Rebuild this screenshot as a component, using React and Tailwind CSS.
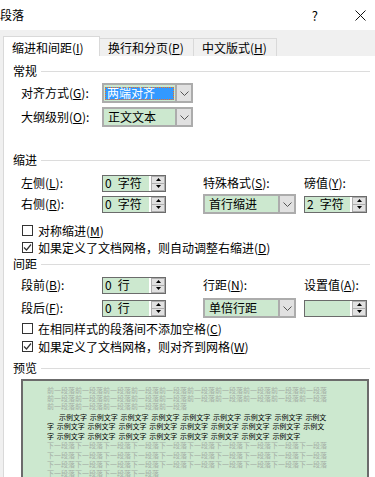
import React from "react";

// Word 段落 dialog, first tab (缩进和间距)
const Key = ({ children }) => (
  <span className="underline underline-offset-[1px]">{children}</span>
);

const Label = ({ text, k, colon = true }) => (
  <span className="whitespace-nowrap">
    {text}(<Key>{k}</Key>){colon ? ":" : ""}
  </span>
);

const Chevron = () => (
  <svg width="9" height="5" viewBox="0 0 9 5">
    <polyline points="0.5,0.5 4.5,4.5 8.5,0.5" fill="none" stroke="#555" strokeWidth="1" />
  </svg>
);

const Dropdown = ({ value, selected, width }) => (
  <div className={`flex h-[20px] ${width} border-2 border-[#acacac] bg-[#cce8cf]`}>
    <div className="flex min-w-0 flex-1 items-center pl-[1px] pr-[1px]">
      {selected ? (
        <span className="flex h-[13px] w-full items-center border border-dotted border-[#f07020] bg-[#3399ff] pl-[1px] leading-none text-white">
          {value}
        </span>
      ) : (
        <span className="pl-[3px] leading-none">{value}</span>
      )}
    </div>
    <div className="flex w-[16px] items-center justify-center border-l-2 border-[#acacac] bg-[#e1e1e1]">
      <Chevron />
    </div>
  </div>
);

const Spinner = ({ num, unit, width = "w-[64px]" }) => (
  <div className={`flex h-[17px] ${width} border border-[#6b6b6b] bg-white`}>
    <div className="flex flex-1 items-center bg-[#cce8cf] pl-[2px] leading-none">
      {num && <span>{num}</span>}
      {unit && <span className="ml-[6px]">{unit}</span>}
    </div>
    <div className="ml-[2px] flex w-[14px] flex-col border border-[#adadad] bg-[#e1e1e1]">
      <div className="flex flex-1 items-center justify-center border-b border-[#adadad]">
        <svg width="5" height="3" viewBox="0 0 5 3">
          <polygon points="2.5,0 5,3 0,3" fill="#000" />
        </svg>
      </div>
      <div className="flex flex-1 items-center justify-center">
        <svg width="5" height="3" viewBox="0 0 5 3">
          <polygon points="0,0 5,0 2.5,3" fill="#000" />
        </svg>
      </div>
    </div>
  </div>
);

const Section = ({ title, className = "" }) => (
  <div className={`flex h-[16px] items-center gap-[4px] pl-[9px] ${className}`}>
    <span className="leading-none">{title}</span>
    <div className="h-px flex-1 bg-[#dcdcdc]" />
  </div>
);

const Check = ({ checked, children, className = "" }) => (
  <div className={`flex h-[17px] items-center pl-[18px] ${className}`}>
    <span className="flex h-[11px] w-[11px] items-center justify-center border border-[#333] bg-white">
      {checked && (
        <svg width="9" height="9" viewBox="0 0 9 9">
          <polyline points="1,4.5 3.5,7 8,1.5" fill="none" stroke="#333" strokeWidth="1.2" />
        </svg>
      )}
    </span>
    <span className="ml-[5px] whitespace-nowrap leading-none">{children}</span>
  </div>
);

const Words = ({ lead, count, tail, indent }) => (
  <div className={`flex h-[9.2px] items-center gap-[2.8px] whitespace-nowrap leading-[7px] ${indent ? "pl-[12px]" : ""}`}>
    {lead && <span>{lead}</span>}
    {Array.from({ length: count }).map((_, i) => (
      <span key={i}>示例文字</span>
    ))}
    {tail && <span>{tail}</span>}
  </div>
);

const GrayLine = ({ word, n, h }) => (
  <div className={`flex ${h} items-center whitespace-nowrap leading-[7px]`}>{word.repeat(n)}</div>
);

const Preview = () => (
  <div className="ml-[17px] mt-[3px] h-[110px] w-[348px] border-2 border-[#6b6b6b] bg-[#cce8cf] pl-[24px] pt-[5px] text-[7px]">
    <div className="text-[#a4aea5]">
      <GrayLine word="前一段落" n={10} h="h-[8.4px]" />
      <GrayLine word="前一段落" n={10} h="h-[8.4px]" />
      <GrayLine word="前一段落" n={5} h="h-[8.4px]" />
    </div>
    <div className="mt-[2px] text-black">
      <Words count={8} tail="示例文" indent />
      <Words lead="字" count={8} tail="示例文" />
      <Words lead="字" count={8} />
    </div>
    <div className="mt-[0.5px] text-[#a4aea5]">
      <GrayLine word="下一段落" n={10} h="h-[9.2px]" />
      <GrayLine word="下一段落" n={10} h="h-[9.2px]" />
      <GrayLine word="下一段落" n={10} h="h-[9.2px]" />
      <GrayLine word="下一段落" n={4} h="h-[9.2px]" />
    </div>
  </div>
);

export default function App() {
  return (
    <div className="h-[477px] w-[375px] overflow-hidden bg-white font-['Noto_Sans_CJK_SC','Noto_Sans',sans-serif] text-[12px] leading-[16px] text-black">
      {/* title bar */}
      <div className="flex h-[30px] items-center justify-between">
        <span className="leading-none">段落</span>
        <div className="flex items-center pr-[9px]">
          <span className="text-[13px] leading-none">?</span>
          <svg className="ml-[37px]" width="11" height="11" viewBox="0 0 11 11">
            <path d="M0.5 0.5 L10.5 10.5 M10.5 0.5 L0.5 10.5" stroke="#111" strokeWidth="1" />
          </svg>
        </div>
      </div>

      {/* tabs */}
      <div className="flex h-[26px] items-end bg-[#f0f0f0] pl-[3px]">
        <div className="flex h-[20px] w-[97px] items-center border border-b-0 border-[#d9d9d9] bg-white pl-[8px] pt-[2px]">
          <Label text="缩进和间距" k="I" colon={false} />
        </div>
        <div className="flex h-[18px] w-[94px] items-center border-r border-t border-[#d9d9d9] pl-[8px]">
          <Label text="换行和分页" k="P" colon={false} />
        </div>
        <div className="flex h-[18px] w-[83px] items-center border-r border-t border-[#d9d9d9] pl-[8px]">
          <Label text="中文版式" k="H" colon={false} />
        </div>
      </div>

      <div className="flex">
        <div className="w-[4px] shrink-0 border-r border-[#d9d9d9] bg-[#f0f0f0]" />
        <div className="flex-1 pr-[5px]">
          <Section title="常规" className="mt-[7px]" />
          <div className="mt-[4px] flex h-[20px] items-center pl-[17px]">
            <div className="w-[81px]"><Label text="对齐方式" k="G" /></div>
            <Dropdown value="两端对齐" selected width="w-[91px]" />
          </div>
          <div className="mt-[4px] flex h-[20px] items-center pl-[17px]">
            <div className="w-[81px]"><Label text="大纲级别" k="O" /></div>
            <Dropdown value="正文文本" width="w-[91px]" />
          </div>

          <Section title="缩进" className="mt-[25px]" />
          <div className="mt-[5px] flex h-[20px] items-center pl-[17px]">
            <div className="w-[81px]"><Label text="左侧" k="L" /></div>
            <Spinner num="0" unit="字符" />
            <div className="ml-[37px] w-[101px]"><Label text="特殊格式" k="S" /></div>
            <Label text="磅值" k="Y" />
          </div>
          <div className="mt-[1px] flex h-[20px] items-center pl-[17px]">
            <div className="w-[81px]"><Label text="右侧" k="R" /></div>
            <Spinner num="0" unit="字符" />
            <div className="ml-[37px]"><Dropdown value="首行缩进" width="w-[93px]" /></div>
            <div className="ml-[8px]"><Spinner num="2" unit="字符" width="w-[63px]" /></div>
          </div>
          <Check className="mt-[8px]">
            对称缩进(<Key>M</Key>)
          </Check>
          <Check checked>
            如果定义了文档网格，则自动调整右缩进(<Key>D</Key>)
          </Check>

          <Section title="间距" />
          <div className="mt-[3px] flex h-[20px] items-center pl-[17px]">
            <div className="w-[81px]"><Label text="段前" k="B" /></div>
            <Spinner num="0" unit="行" />
            <div className="ml-[37px] w-[101px]"><Label text="行距" k="N" /></div>
            <Label text="设置值" k="A" />
          </div>
          <div className="mt-[3px] flex h-[20px] items-center pl-[17px]">
            <div className="w-[81px]"><Label text="段后" k="F" /></div>
            <Spinner num="0" unit="行" />
            <div className="ml-[37px]"><Dropdown value="单倍行距" width="w-[93px]" /></div>
            <div className="ml-[8px]"><Spinner width="w-[63px]" /></div>
          </div>
          <Check className="mt-[2px]">
            在相同样式的段落间不添加空格(<Key>C</Key>)
          </Check>
          <Check checked className="mt-[1px]">
            如果定义了文档网格，则对齐到网格(<Key>W</Key>)
          </Check>

          <Section title="预览" className="mt-[5px]" />
          <Preview />
        </div>
      </div>
    </div>
  );
}
